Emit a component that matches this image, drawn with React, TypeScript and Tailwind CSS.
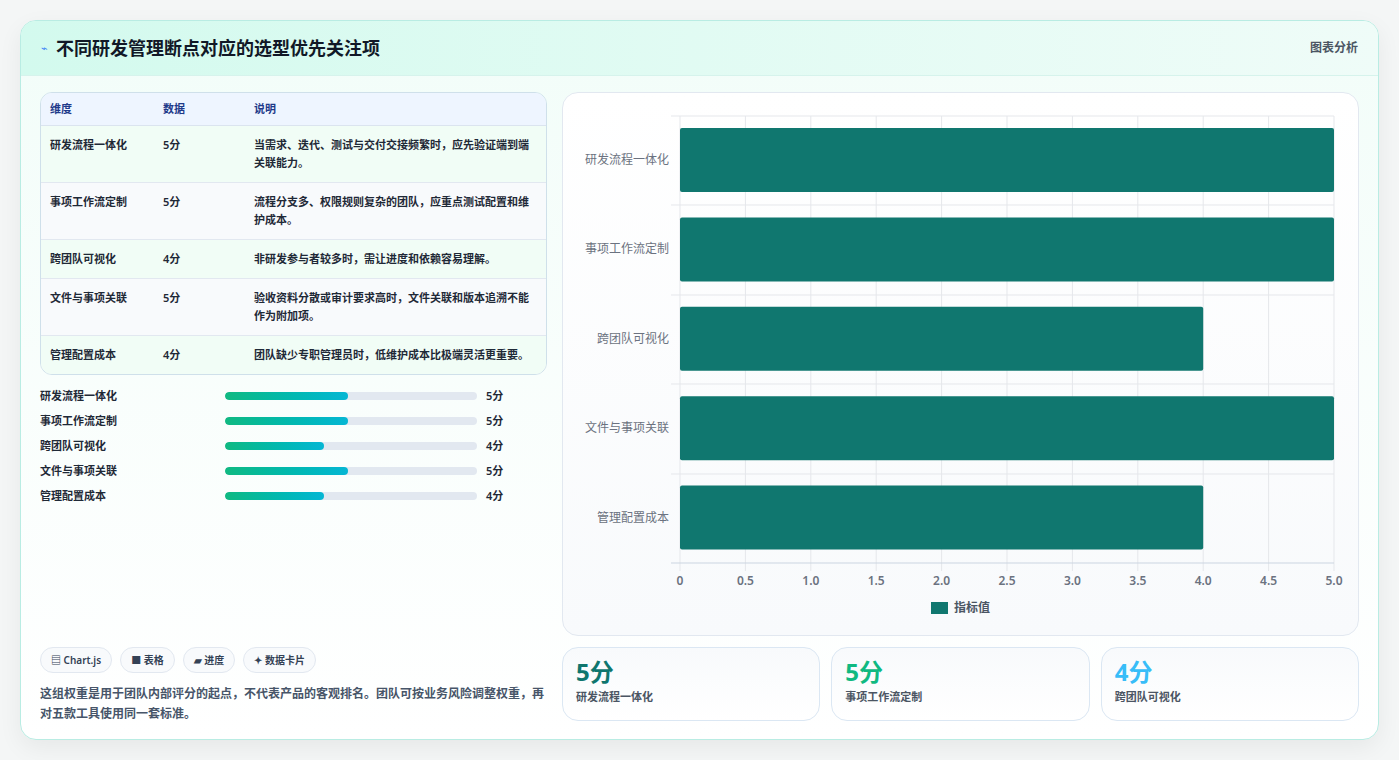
import React from 'react';

const rows = [
  { name: '研发流程一体化', v: 5, d: '当需求、迭代、测试与交付交接频繁时，应先验证端到端关联能力。' },
  { name: '事项工作流定制', v: 5, d: '流程分支多、权限规则复杂的团队，应重点测试配置和维护成本。' },
  { name: '跨团队可视化', v: 4, d: '非研发参与者较多时，需让进度和依赖容易理解。' },
  { name: '文件与事项关联', v: 5, d: '验收资料分散或审计要求高时，文件关联和版本追溯不能作为附加项。' },
  { name: '管理配置成本', v: 4, d: '团队缺少专职管理员时，低维护成本比极端灵活更重要。' },
];

function Chart() {
  const x0 = 117;
  const step = 65.4;
  const ticks = ['0', '0.5', '1.0', '1.5', '2.0', '2.5', '3.0', '3.5', '4.0', '4.5', '5.0'];
  const hs = [23, 112, 202, 291, 381, 470];
  return (
    <svg width="795" height="544" className="block">
      {ticks.map((t, i) => (
        <line key={'v' + i} x1={x0 + i * step} x2={x0 + i * step} y1={23} y2={478} stroke="#e5e7eb" />
      ))}
      {hs.map((y, i) => (
        <line key={'h' + i} x1={108} x2={771} y1={y} y2={y} stroke={i === 5 ? '#cbd5e1' : '#e5e7eb'} />
      ))}
      {rows.map((r, i) => {
        const cy = 67 + i * 89.4;
        return (
          <g key={r.name}>
            <rect x={x0} y={cy - 32} width={r.v * 2 * step} height={64} rx={2} fill="#10776f" />
            <text x={106} y={cy + 4} textAnchor="end" fontSize="12" fill="#6b7280">{r.name}</text>
          </g>
        );
      })}
      {ticks.map((t, i) => (
        <text key={'t' + i} x={x0 + i * step} y={492} textAnchor="middle" fontSize="12" fontWeight="600" fill="#6b7280">{t}</text>
      ))}
      <rect x={368} y={509} width={17} height={12} fill="#10776f" />
      <text x={391} y={519} fontSize="12" fontWeight="600" fill="#4b5563">指标值</text>
    </svg>
  );
}

export default function App() {
  return (
    <div className="min-h-screen bg-[#f4f6f6] pt-5 px-5" style={{ fontFamily: '"Noto Sans", "Noto Sans CJK SC", sans-serif' }}>
      <div className="w-[1359px] h-[720px] rounded-2xl border border-[#b9ece3] bg-gradient-to-b from-[#f2fdf9] to-white shadow-[0_8px_24px_rgba(0,0,0,0.06)] overflow-hidden flex flex-col">
        <div className="h-[55px] shrink-0 flex items-center justify-between px-5 bg-gradient-to-r from-[#d3faee] to-[#effcf8] border-b border-[#d6f3ec]">
          <div className="flex items-center gap-2">
            <span className="text-[11px] text-[#3b82f6]">⌁</span>
            <span className="text-[18px] font-bold text-[#111827]">不同研发管理断点对应的选型优先关注项</span>
          </div>
          <span className="text-[12px] font-semibold text-[#4b5563]">图表分析</span>
        </div>
        <div className="flex gap-[15px] px-[19px] pt-[16px]">
          <div className="w-[510px] flex flex-col">
            <div className="rounded-xl border border-[#cfe0ea] overflow-hidden text-[11px] text-[#1f2937]">
              <div className="flex h-[33px] items-center bg-[#eef5ff] font-semibold text-[#1e3a8a] border-b border-[#dbe4ef]">
                <div className="w-[122px] pl-[9px]">维度</div>
                <div className="w-[91px]">数据</div>
                <div>说明</div>
              </div>
              {rows.map((r, i) => (
                <div key={r.name} className={`flex py-[10px] font-semibold leading-[18px] ${i < 4 ? 'border-b border-[#e2e8f0]' : ''} ${i % 2 === 0 ? 'bg-[#f1fdf6]' : 'bg-[#f8fafc]'}`}>
                  <div className="w-[122px] pl-[9px] shrink-0">{r.name}</div>
                  <div className="w-[91px] shrink-0">{r.v}分</div>
                  <div className="pr-[8px]">{r.d}</div>
                </div>
              ))}
            </div>
            <div className="mt-[12px] flex flex-col gap-[7px]">
              {rows.map((r) => (
                <div key={r.name} className="flex items-center h-[18px] text-[11px] font-semibold text-[#1f2937]">
                  <div className="w-[185px]">{r.name}</div>
                  <div className="w-[252px] h-[8px] rounded-full bg-[#e2e8f0] overflow-hidden">
                    <div className="h-full rounded-full bg-gradient-to-r from-[#10b981] to-[#06b6d4]" style={{ width: `${r.v * 9.8}%` }} />
                  </div>
                  <div className="ml-[9px]">{r.v}分</div>
                </div>
              ))}
            </div>
            <div className="mt-[142px] flex gap-[8px]">
              {['▤ Chart.js', '■ 表格', '▰ 进度', '✦ 数据卡片'].map((c) => (
                <span key={c} className="h-[26px] px-[10px] flex items-center rounded-full border border-[#e2e8f0] bg-[#f8fafc] text-[10px] font-semibold text-[#334155]">{c}</span>
              ))}
            </div>
            <p className="mt-[11px] text-[12px] font-semibold leading-[20px] text-[#475569]">这组权重是用于团队内部评分的起点，不代表产品的客观排名。团队可按业务风险调整权重，再对五款工具使用同一套标准。</p>
          </div>
          <div className="flex-1 flex flex-col gap-[11px]">
            <div className="h-[544px] rounded-2xl border border-[#e2e8f0] bg-gradient-to-b from-white to-[#f8fafc]">
              <Chart />
            </div>
            <div className="grid grid-cols-3 gap-[11px]">
              {[
                { v: '5分', n: '研发流程一体化', c: 'text-[#0f766e]' },
                { v: '5分', n: '事项工作流定制', c: 'text-[#10b981]' },
                { v: '4分', n: '跨团队可视化', c: 'text-[#38bdf8]' },
              ].map((s) => (
                <div key={s.n} className="h-[74px] rounded-2xl border border-[#dbe7f3] bg-gradient-to-b from-[#f8fafc] to-white px-[13px] pt-[9px]">
                  <div className={`text-[24px] font-bold leading-[30px] ${s.c}`}>{s.v}</div>
                  <div className="text-[11px] font-semibold text-[#4b5563] mt-[2px]">{s.n}</div>
                </div>
              ))}
            </div>
          </div>
        </div>
      </div>
    </div>
  );
}
